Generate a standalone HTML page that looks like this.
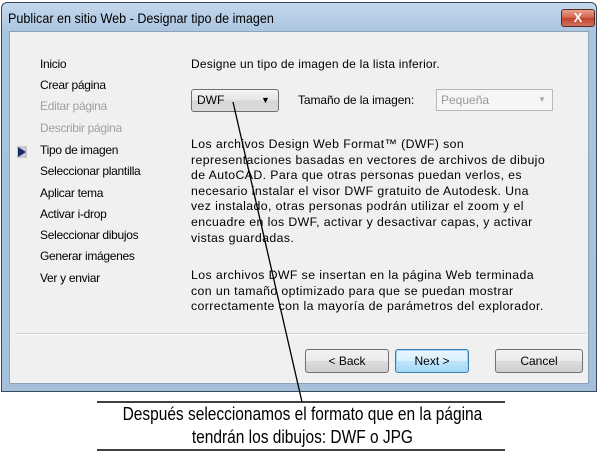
<!DOCTYPE html>
<html><head><meta charset="utf-8"><style>
*{margin:0;padding:0;box-sizing:border-box}
body{width:605px;height:453px;background:#fff;position:relative;overflow:hidden;font-family:"Liberation Sans",sans-serif;font-size:12px;color:#000}
.a{position:absolute;white-space:nowrap}
#win{position:absolute;left:1px;top:2px;width:596px;height:390px;border:1px solid #3a4a5a;border-radius:6px 6px 0 0;background:linear-gradient(#c5d8ec,#aac4e0 30px,#a6c0dc);}
#client{position:absolute;left:7px;top:28px;width:580px;height:353px;background:#f0f0f0;border:1px solid #8fa3b8}
.nav{position:absolute;left:40px;font-size:12px;letter-spacing:-0.3px}
.dis{color:#a0a0a0}
.btn{position:absolute;top:349px;height:24px;border:1px solid #707070;border-radius:3px;background:linear-gradient(#f2f2f2,#ebebeb 50%,#dddddd 50%,#cfcfcf);text-align:center;line-height:22px;font-size:12px}
p{position:absolute;left:191px;width:400px;font-size:12.3px;line-height:15.6px;letter-spacing:0.4px;white-space:nowrap}
</style></head><body>
<div id="win">
<div class="a" style="left:6px;top:7px;font-size:14px;color:#000;transform:scaleX(0.9);transform-origin:left">Publicar en sitio Web - Designar tipo de imagen</div>
<div class="a" style="left:559px;top:6px;width:34px;height:18px;border:1px solid #5a2a20;border-radius:3px;background:linear-gradient(#e8a090,#d06048 50%,#c04028 50%,#d07060);color:#fff;font-weight:bold;text-align:center;line-height:16px;font-size:13px">X</div>
<div id="client"></div>
</div>
<div class="nav" style="top:57px">Inicio</div>
<div class="nav" style="top:78px">Crear página</div>
<div class="nav dis" style="top:99px">Editar página</div>
<div class="nav dis" style="top:121px">Describir página</div>
<div class="a" style="left:17px;top:146px;width:10px;height:12px;background:#c8c8d0"></div>
<div class="a" style="left:18px;top:147px;width:0;height:0;border-left:8px solid #1a2a6a;border-top:5px solid transparent;border-bottom:5px solid transparent"></div>
<div class="nav" style="top:143px">Tipo de imagen</div>
<div class="nav" style="top:164px">Seleccionar plantilla</div>
<div class="nav" style="top:186px">Aplicar tema</div>
<div class="nav" style="top:207px">Activar i-drop</div>
<div class="nav" style="top:228px">Seleccionar dibujos</div>
<div class="nav" style="top:249px">Generar imágenes</div>
<div class="nav" style="top:271px">Ver y enviar</div>
<div class="a" style="left:191px;top:57px;letter-spacing:0.2px">Designe un tipo de imagen de la lista inferior.</div>
<div class="a" style="left:191px;top:89px;width:88px;height:23px;border:1px solid #707070;border-radius:3px;background:linear-gradient(#f4f4f4,#e4e4e4 50%,#d6d6d6 50%,#dcdcdc);padding-left:5px;line-height:21px">DWF<span style="position:absolute;left:69px;top:0;font-size:9px">▼</span></div>
<div class="a" style="left:298px;top:93px;letter-spacing:-0.1px">Tamaño de la imagen:</div>
<div class="a" style="left:436px;top:89px;width:117px;height:22px;border:1px solid #b8b8b8;background:#f6f6f6;color:#9a9a9a;padding-left:4px;line-height:20px">Pequeña<span style="position:absolute;left:101px;top:0;font-size:8px;color:#aaa">▼</span></div>
<p style="top:137px">Los archivos Design Web Format™ (DWF) son<br>representaciones basadas en vectores de archivos de dibujo<br>de AutoCAD. Para que otras personas puedan verlos, es<br>necesario instalar el visor DWF gratuito de Autodesk. Una<br>vez instalado, otras personas podrán utilizar el zoom y el<br>encuadre en los DWF, activar y desactivar capas, y activar<br>vistas guardadas.</p>
<p style="top:268px">Los archivos DWF se insertan en la página Web terminada<br>con un tamaño optimizado para que se puedan mostrar<br>correctamente con la mayoría de parámetros del explorador.</p>
<div class="a" style="left:17px;top:333px;width:570px;height:2px;border-top:1px solid #d0d0d0;border-bottom:1px solid #fff"></div>
<div class="btn" style="left:305px;width:84px">&lt; Back</div>
<div class="btn" style="left:395px;width:74px;border-color:#3c7fb1;background:linear-gradient(#eaf6fd,#d9f0fc 50%,#bee6fd 50%,#a7d9f5);box-shadow:inset 0 0 0 1px #9ed3f4">Next &gt;</div>
<div class="btn" style="left:495px;width:88px">Cancel</div>
<svg class="a" style="left:0;top:0" width="605" height="453"><line x1="233" y1="102" x2="302" y2="402" stroke="#000" stroke-width="1.3"/><line x1="97" y1="402" x2="505" y2="402" stroke="#000" stroke-width="1.5"/><line x1="97" y1="450" x2="505" y2="450" stroke="#000" stroke-width="1.5"/></svg>
<div class="a" style="left:0;width:605px;top:403px;text-align:center;font-size:18px;line-height:23px;white-space:normal;transform:scaleX(0.86);transform-origin:302px 0">Después seleccionamos el formato que en la página<br>tendrán los dibujos: DWF o JPG</div>
</body></html>
